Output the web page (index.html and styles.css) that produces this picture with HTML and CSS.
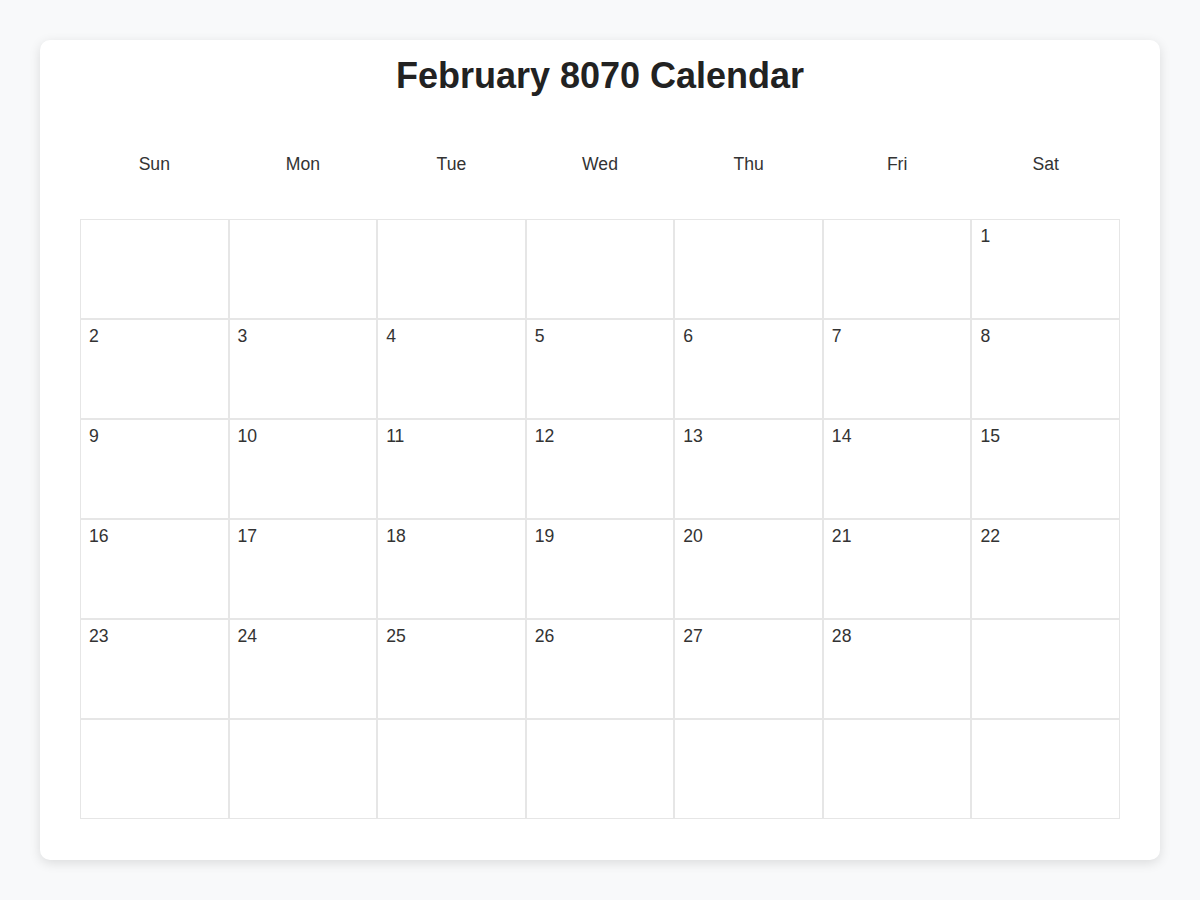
FILE: index.html
```html
<!DOCTYPE html>
<html lang="en">
<head>
<meta charset="utf-8">
<title>February 8070 Calendar</title>
<link rel="stylesheet" href="styles.css">
</head>
<body>
<div class="card">
  <h1 class="title">February 8070 Calendar</h1>
  <div class="weekdays">
    <div class="weekday">Sun</div>
    <div class="weekday">Mon</div>
    <div class="weekday">Tue</div>
    <div class="weekday">Wed</div>
    <div class="weekday">Thu</div>
    <div class="weekday">Fri</div>
    <div class="weekday">Sat</div>
  </div>
  <div class="grid">
    <div class="day"></div><div class="day"></div><div class="day"></div><div class="day"></div><div class="day"></div><div class="day"></div><div class="day">1</div>
    <div class="day">2</div><div class="day">3</div><div class="day">4</div><div class="day">5</div><div class="day">6</div><div class="day">7</div><div class="day">8</div>
    <div class="day">9</div><div class="day">10</div><div class="day">11</div><div class="day">12</div><div class="day">13</div><div class="day">14</div><div class="day">15</div>
    <div class="day">16</div><div class="day">17</div><div class="day">18</div><div class="day">19</div><div class="day">20</div><div class="day">21</div><div class="day">22</div>
    <div class="day">23</div><div class="day">24</div><div class="day">25</div><div class="day">26</div><div class="day">27</div><div class="day">28</div><div class="day"></div>
    <div class="day"></div><div class="day"></div><div class="day"></div><div class="day"></div><div class="day"></div><div class="day"></div><div class="day"></div>
  </div>
</div>
</body>
</html>
```
FILE: styles.css
```css
html, body {
  margin: 0;
  padding: 0;
}
body {
  background: #f8f9fa;
  font-family: "Liberation Sans", Arial, sans-serif;
  color: #333;
  padding: 40px;
}
.card {
  background: #fff;
  border-radius: 10px;
  box-shadow: 0 3px 12px rgba(0, 0, 0, 0.12);
  padding: 15px 40px 41px;
}
.title {
  margin: 0 0 47px;
  font-size: 36px;
  font-weight: bold;
  text-align: center;
  color: #222;
}
.weekdays {
  display: grid;
  grid-template-columns: repeat(7, 1fr);
  margin-bottom: 34px;
}
.weekday {
  text-align: center;
  font-size: 17.6px;
  padding: 10px 0;
  color: #333;
}
.grid {
  display: grid;
  grid-template-columns: repeat(7, 1fr);
}
.day {
  box-sizing: border-box;
  height: 100px;
  border: 1px solid #e6e6e6;
  padding: 6px 8px;
  font-size: 17.6px;
  color: #333;
}
```
